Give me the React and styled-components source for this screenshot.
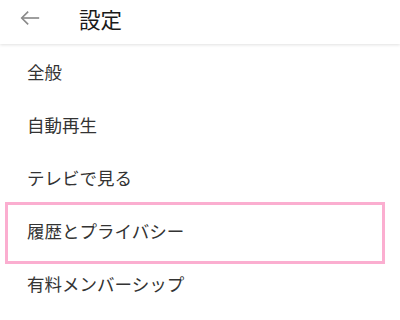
import React from 'react';
import styled, { createGlobalStyle } from 'styled-components';

const GlobalStyle = createGlobalStyle`
	html, body {
		margin: 0;
		padding: 0;
		background: #fff;
	}
	body {
		font-family: "Noto Sans CJK JP", "Noto Sans", sans-serif;
		color: #212121;
	}
`;

const Page = styled.div`
	width: 400px;
	height: 320px;
	overflow: hidden;
	background: #fff;
`;

const Header = styled.header`
	height: 44px;
	display: flex;
	align-items: center;
	box-shadow: 0 1px 3px rgba(0, 0, 0, 0.12);
	position: relative;
	z-index: 1;
`;

const BackButton = styled.button`
	width: 62px;
	height: 44px;
	padding: 0 0 8px 19px;
	border: 0;
	background: none;
	display: flex;
	align-items: center;
	color: #8a8a8a;
`;

const Title = styled.h1`
	margin: 0 0 8px 17px;
	font-size: 21.5px;
	font-weight: 400;
	color: #1a1a1a;
`;

const List = styled.ul`
	list-style: none;
	margin: 0;
	padding: 1px 0 0;
`;

const Item = styled.li`
	position: relative;
	height: 53px;
	display: flex;
	align-items: center;
	padding-left: 27px;
	font-size: 17.5px;
	color: #333;

	${p => p.$focused && `
		&::after {
			content: '';
			position: absolute;
			top: -2px;
			bottom: -7px;
			left: 5px;
			right: 15px;
			border: 3px solid #fbaed0;
			pointer-events: none;
		}
	`}
`;

const items = ['全般', '自動再生', 'テレビで見る', '履歴とプライバシー', '有料メンバーシップ'];

export default function App() {
	return (
		<Page>
			<GlobalStyle />
			<Header>
				<BackButton aria-label="戻る">
					<svg width="22" height="22" viewBox="0 0 24 24" fill="none" stroke="currentColor" strokeWidth="1.8">
						<path d="M22 12H3" />
						<path d="M10 5l-7 7 7 7" />
					</svg>
				</BackButton>
				<Title>設定</Title>
			</Header>
			<List>
				{items.map(label => (
					<Item key={label} $focused={label === '履歴とプライバシー'}>{label}</Item>
				))}
			</List>
		</Page>
	);
}
